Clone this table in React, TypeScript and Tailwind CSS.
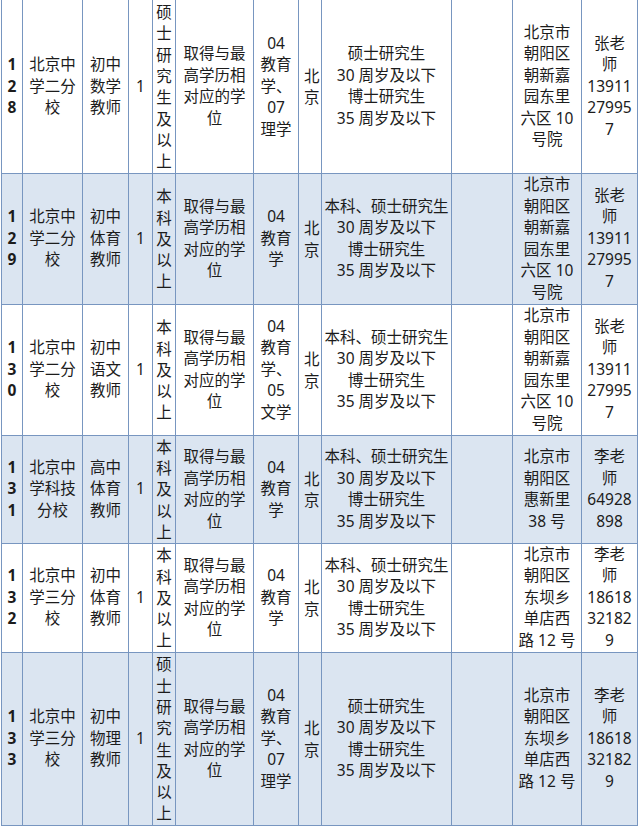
import React from 'react';

type Row = {
  no: string[];
  school: string[];
  post: string[];
  edu: string[];
  major: string[];
  age: string[];
  addr: string[];
  contact: string[];
  h: string;
  blue: boolean;
};

const degree = ['取得与最', '高学历相', '对应的学', '位'];
const master = ['硕', '士', '研', '究', '生', '及', '以', '上'];
const bachelor = ['本', '科', '及', '以', '上'];
const ageMaster = ['硕士研究生', '30 周岁及以下', '博士研究生', '35 周岁及以下'];
const ageBachelor = ['本科、硕士研究生', '30 周岁及以下', '博士研究生', '35 周岁及以下'];
const addrChaoxin = ['北京市', '朝阳区', '朝新嘉', '园东里', '六区 10', '号院'];
const addrDongba = ['北京市', '朝阳区', '东坝乡', '单店西', '路 12 号'];
const zhang = ['张老', '师', '13911', '27995', '7'];
const li = ['李老', '师', '18618', '32182', '9'];

const rows: Row[] = [
  { no: ['1', '2', '8'], school: ['北京中', '学二分', '校'], post: ['初中', '数学', '教师'], edu: master, major: ['04', '教育', '学、', '07', '理学'], age: ageMaster, addr: addrChaoxin, contact: zhang, h: 'h-[173px]', blue: false },
  { no: ['1', '2', '9'], school: ['北京中', '学二分', '校'], post: ['初中', '体育', '教师'], edu: bachelor, major: ['04', '教育', '学'], age: ageBachelor, addr: addrChaoxin, contact: zhang, h: 'h-[131px]', blue: true },
  { no: ['1', '3', '0'], school: ['北京中', '学二分', '校'], post: ['初中', '语文', '教师'], edu: bachelor, major: ['04', '教育', '学、', '05', '文学'], age: ageBachelor, addr: addrChaoxin, contact: zhang, h: 'h-[131px]', blue: false },
  { no: ['1', '3', '1'], school: ['北京中', '学科技', '分校'], post: ['高中', '体育', '教师'], edu: bachelor, major: ['04', '教育', '学'], age: ageBachelor, addr: ['北京市', '朝阳区', '惠新里', '38 号'], contact: ['李老', '师', '64928', '898'], h: 'h-[108px]', blue: true },
  { no: ['1', '3', '2'], school: ['北京中', '学三分', '校'], post: ['初中', '体育', '教师'], edu: bachelor, major: ['04', '教育', '学'], age: ageBachelor, addr: addrDongba, contact: li, h: 'h-[109px]', blue: false },
  { no: ['1', '3', '3'], school: ['北京中', '学三分', '校'], post: ['初中', '物理', '教师'], edu: master, major: ['04', '教育', '学、', '07', '理学'], age: ageMaster, addr: addrDongba, contact: li, h: 'h-[173px]', blue: true },
];

const Lines = ({ lines }: { lines: string[] }) => (
  <>
    {lines.map((l, i) => (
      <div key={i} className="whitespace-nowrap">
        {l}
      </div>
    ))}
  </>
);

const cell = 'border-[1.5px] border-[#7896c0] p-0 text-center align-middle overflow-hidden';

const App = () => {
  return (
    <div className="w-[640px] h-[828px] overflow-hidden bg-white pl-[1px] font-['Noto_Sans','Noto_Sans_CJK_SC',sans-serif] text-[15.5px] leading-[21.5px] text-[#1c1c1c]">
      <table className="table-fixed border-collapse w-[636px]">
        <colgroup>
          <col className="w-[21px]" />
          <col className="w-[60px]" />
          <col className="w-[46px]" />
          <col className="w-[24px]" />
          <col className="w-[23px]" />
          <col className="w-[78px]" />
          <col className="w-[45px]" />
          <col className="w-[23px]" />
          <col className="w-[130px]" />
          <col className="w-[61px]" />
          <col className="w-[69px]" />
          <col className="w-[56px]" />
        </colgroup>
        <tbody>
          {rows.map((r, i) => (
            <tr key={i} className={`${r.h} ${r.blue ? 'bg-[#dbe5f1]' : 'bg-white'}`}>
              <td className={`${cell} font-bold ${i === 0 ? 'border-t-0' : ''}`}>
                <Lines lines={r.no} />
              </td>
              <td className={`${cell} ${i === 0 ? 'border-t-0' : ''}`}>
                <Lines lines={r.school} />
              </td>
              <td className={`${cell} ${i === 0 ? 'border-t-0' : ''}`}>
                <Lines lines={r.post} />
              </td>
              <td className={`${cell} ${i === 0 ? 'border-t-0' : ''}`}>1</td>
              <td className={`${cell} font-['Noto_Sans_CJK_SC',sans-serif] leading-[21.3px] ${i === 0 ? 'border-t-0' : ''}`}>
                <Lines lines={r.edu} />
              </td>
              <td className={`${cell} ${i === 0 ? 'border-t-0' : ''}`}>
                <Lines lines={degree} />
              </td>
              <td className={`${cell} ${i === 0 ? 'border-t-0' : ''}`}>
                <Lines lines={r.major} />
              </td>
              <td className={`${cell} ${i === 0 ? 'border-t-0' : ''}`}>
                <div className="w-full overflow-hidden pl-[5px] text-left font-['Noto_Sans_CJK_SC',sans-serif]">
                  <div>北</div>
                  <div>京</div>
                </div>
              </td>
              <td className={`${cell} ${i === 0 ? 'border-t-0' : ''}`}>
                <Lines lines={r.age} />
              </td>
              <td className={`${cell} ${i === 0 ? 'border-t-0' : ''}`}></td>
              <td className={`${cell} ${i === 0 ? 'border-t-0' : ''}`}>
                <Lines lines={r.addr} />
              </td>
              <td className={`${cell} ${i === 0 ? 'border-t-0' : ''}`}>
                <Lines lines={r.contact} />
              </td>
            </tr>
          ))}
        </tbody>
      </table>
    </div>
  );
};

export default App;
